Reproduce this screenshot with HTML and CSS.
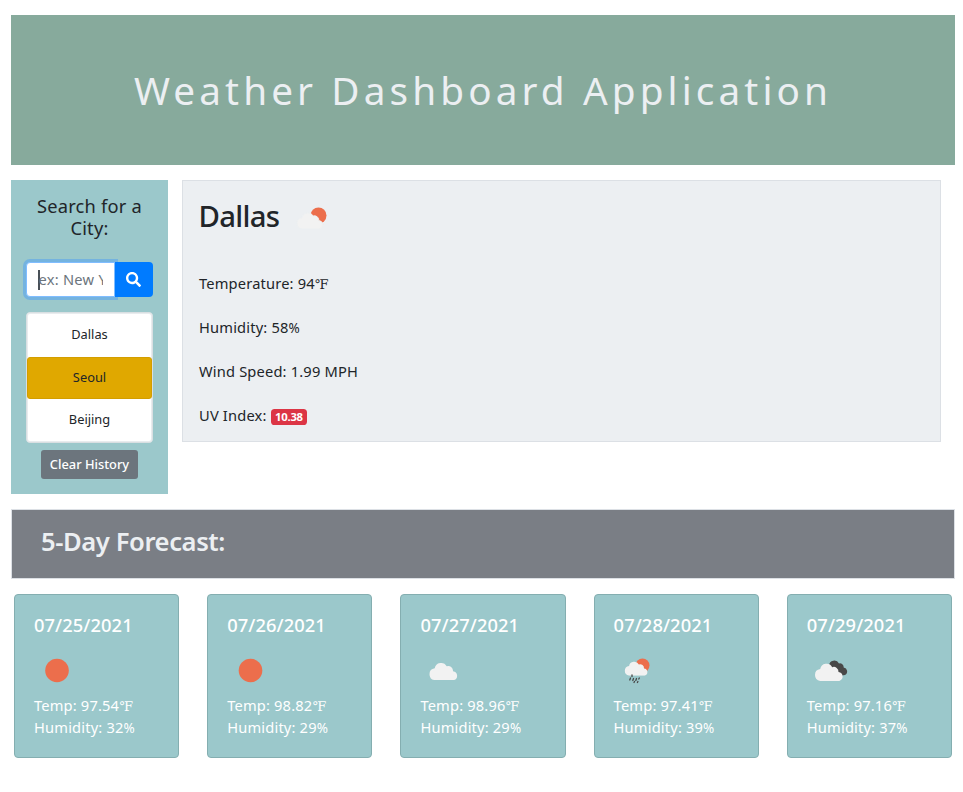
FILE: index.html
```html
<!DOCTYPE html>
<html lang="en">
<head>
<meta charset="utf-8">
<title>Weather Dashboard Application</title>
<link rel="stylesheet" href="styles.css">
</head>
<body>
<svg class="defs" aria-hidden="true">
  <symbol id="cloud" viewBox="0 0 29 18"><path d="M6 18A5.8 5.8 0 0 1 6 6.5A6.2 6.2 0 0 1 17.600 4.700A4.600 4.600 0 0 1 23.700 9.400A4.400 4.400 0 0 1 24.500 18Z"/></symbol>
</svg>
<header class="banner"><h1>Weather Dashboard Application</h1></header>
<main>
  <div class="top">
    <aside class="search">
      <h2>Search for a City:</h2>
      <div class="field">
        <div class="input"><span class="caret"></span><span class="placeholder">ex: New York</span></div>
        <button class="go" aria-label="Search"><svg width="15" height="15" viewBox="0 0 512 512"><path fill="#fff" d="M505 442.700L405.300 343c-4.500-4.500-10.600-7-17-7H372c27.600-35.300 44-79.700 44-128C416 93.100 322.900 0 208 0S0 93.100 0 208s93.100 208 208 208c48.300 0 92.700-16.400 128-44v16.300c0 6.400 2.500 12.500 7 17l99.700 99.700c9.400 9.400 24.600 9.400 33.900 0l28.300-28.300c9.400-9.400 9.400-24.600.1-34zM208 336c-70.700 0-128-57.200-128-128 0-70.700 57.200-128 128-128 70.700 0 128 57.200 128 128 0 70.700-57.200 128-128 128z"/></svg></button>
      </div>
      <div class="history">
        <button>Dallas</button>
        <button class="active">Seoul</button>
        <button>Beijing</button>
      </div>
      <button class="clear">Clear History</button>
    </aside>
    <section class="current">
      <div class="city"><h2>Dallas</h2>
        <svg class="city-icon" width="46" height="46" viewBox="0 0 46 46"><circle cx="28.500" cy="18.500" r="8" fill="#ec6e4c"/><use href="#cloud" x="6" y="14.500" width="28" height="17.400" fill="#f2f2f2" stroke="#eceff2" stroke-width="1"/></svg>
      </div>
      <p>Temperature: 94<span class="deg">℉</span></p>
      <p>Humidity: 58<span class="pct">%</span></p>
      <p>Wind Speed: 1.99 MPH</p>
      <p>UV Index: <span class="badge">10.38</span></p>
    </section>
  </div>
  <h2 class="forecast-title">5-Day Forecast:</h2>
  <div class="cards">
    <article><h3>07/25/2021</h3><svg width="46" height="46"><circle cx="23" cy="23.500" r="11.800" fill="#ec6e4c"/></svg><p>Temp: 97.54<span class="deg">℉</span></p><p>Humidity: 32<span class="pct">%</span></p></article>
    <article><h3>07/26/2021</h3><svg width="46" height="46"><circle cx="23.500" cy="23.500" r="11.800" fill="#ec6e4c"/></svg><p>Temp: 98.82<span class="deg">℉</span></p><p>Humidity: 29<span class="pct">%</span></p></article>
    <article><h3>07/27/2021</h3><svg width="46" height="46"><use href="#cloud" x="8.500" y="14.500" width="30" height="18.600" fill="#f2f2f2"/></svg><p>Temp: 98.96<span class="deg">℉</span></p><p>Humidity: 29<span class="pct">%</span></p></article>
    <article><h3>07/28/2021</h3><svg width="46" height="46"><circle cx="28.500" cy="18.500" r="7" fill="#ec6e4c"/><use href="#cloud" x="10" y="13.500" width="24.500" height="15.200" fill="#f2f2f2"/><path d="M18 28v1.500m-1.500 1.500l-.7 2m3.700-1.500l-.7 2m3.700-2l-.7 2m3.500-2.500l-.5 1m-4.300 2.500l-.5 1m3.900-1l-.5 1" fill="none" stroke="#484848" stroke-width="1.300" stroke-linecap="round"/></svg><p>Temp: 97.41<span class="deg">℉</span></p><p>Humidity: 39<span class="pct">%</span></p></article>
    <article><h3>07/29/2021</h3><svg width="46" height="46"><path d="M22 18.500A5.300 5.300 0 0 1 32 16.500A3.800 3.800 0 0 1 36.700 20.500A4 4 0 0 1 38 28L35 28.500Z" fill="#484848"/><use href="#cloud" x="7" y="15.300" width="30" height="18.600" fill="#f2f2f2"/></svg><p>Temp: 97.16<span class="deg">℉</span></p><p>Humidity: 37<span class="pct">%</span></p></article>
  </div>
</main>
</body>
</html>
```
FILE: styles.css
```css
* { box-sizing: border-box; }
body { margin: 0; padding: 15px 8px 0 11px; background: #fff; color: #212529; font: 14.67px/22px "Noto Sans", "Open Sans", sans-serif; }
h1, h2, h3, p { margin: 0; }
button { font: inherit; margin: 0; padding: 0; border: 0; }
.defs { position: absolute; width: 0; height: 0; }
.banner { height: 150px; padding-top: 51px; background: #87aa9c; text-align: center; }
.banner h1 { font-size: 38.700px; line-height: 48px; font-weight: 400; letter-spacing: 4.120px; color: #eceff2; }
.top { display: flex; align-items: flex-start; gap: 14px; margin-top: 15px; }
.search { width: 157px; height: 314px; padding: 15px 15px 0; background: #9bc8cb; text-align: center; }
.search h2 { font-size: 18.300px; line-height: 22px; font-weight: 400; letter-spacing: .2px; }
.field { display: flex; height: 35px; margin-top: 23px; }
.input { display: flex; align-items: center; width: 89px; padding: 0 11px; overflow: hidden; background: #fff; border: 1px solid #80bdff; border-radius: 4px 0 0 4px; box-shadow: 0 0 0 3px #74b3df; color: #6c757d; }
.caret { flex: none; width: 1.500px; height: 20px; background: #495057; margin-right: -1px; }
.placeholder { overflow: hidden; white-space: nowrap; width: 66px; padding-bottom: 2px; letter-spacing: .25px; text-align: left; }
.go { position: relative; width: 38px; display: grid; place-items: center; background: #007bff; border-radius: 0 4px 4px 0; }
.go svg { margin-left: -1px; }
.history { height: 131px; margin-top: 15px; border: 1px solid #d9dfe2; box-shadow: inset 0 0 0 1px #e8ecee; border-radius: 4px; background: #fff; display: flex; flex-direction: column; }
.history button { height: 43px; padding-bottom: 3px; background: none; color: #212529; font-size: 12.830px; }
.history .active { height: 42px; padding-bottom: 2px; background: #e0a800; border: 1px solid #d39e00; border-radius: 3px; }
.history button:first-child { height: 44px; padding-bottom: 2px; }
.clear { width: 97px; height: 29px; margin-top: 7px; padding-bottom: 2px; border-radius: 3px; background: #6c757d; color: #fff; font-size: 12.830px; font-weight: 500; }
.current { width: 759px; height: 262px; padding: 0 16px; border: 1px solid #dce0e5; background: #eceff2; }
.city { display: flex; align-items: center; height: 72px; margin-bottom: 19px; gap: 12px; }
.city h2 { font-size: 29.300px; line-height: 36px; margin: -2px 0 0 -.5px; font-weight: 500; letter-spacing: -.7px; }
.city-icon { margin: 6px 0 0 -1px; }
.current p, .cards p { height: 22px; letter-spacing: .17px; }
.current p { margin-bottom: 22px; }
.deg { font-family: "DejaVu Serif", "Liberation Serif", serif; font-size: 13px; line-height: 1; }
.pct { font-size: 13.500px; line-height: 1; }
.badge { display: inline-block; height: 16px; padding: 0 4.500px; border-radius: 3.600px; background: #dc3545; color: #fff; font-size: 11.300px; line-height: 16px; font-weight: 700; letter-spacing: -.25px; vertical-align: 0; }
.forecast-title { height: 70px; margin-top: 15px; padding: 16px 29px; border: 1px solid #dce0e5; background: #7a7e85; color: #eceff2; font-size: 25.600px; line-height: 32px; font-weight: 600; letter-spacing: -.42px; }
.cards { display: grid; grid-template-columns: repeat(5, 1fr); gap: 28px; margin: 15px 3px 0; }
.cards article { height: 164px; padding: 19px 0 0 19px; border: 1px solid #84aeb0; border-radius: 4px; background: #9bc8cb; color: #fff; }
.cards h3 { font-size: 18.300px; line-height: 22px; font-weight: 500; letter-spacing: .1px; }
.cards svg { display: block; margin: 11px 0 1px; }
```
